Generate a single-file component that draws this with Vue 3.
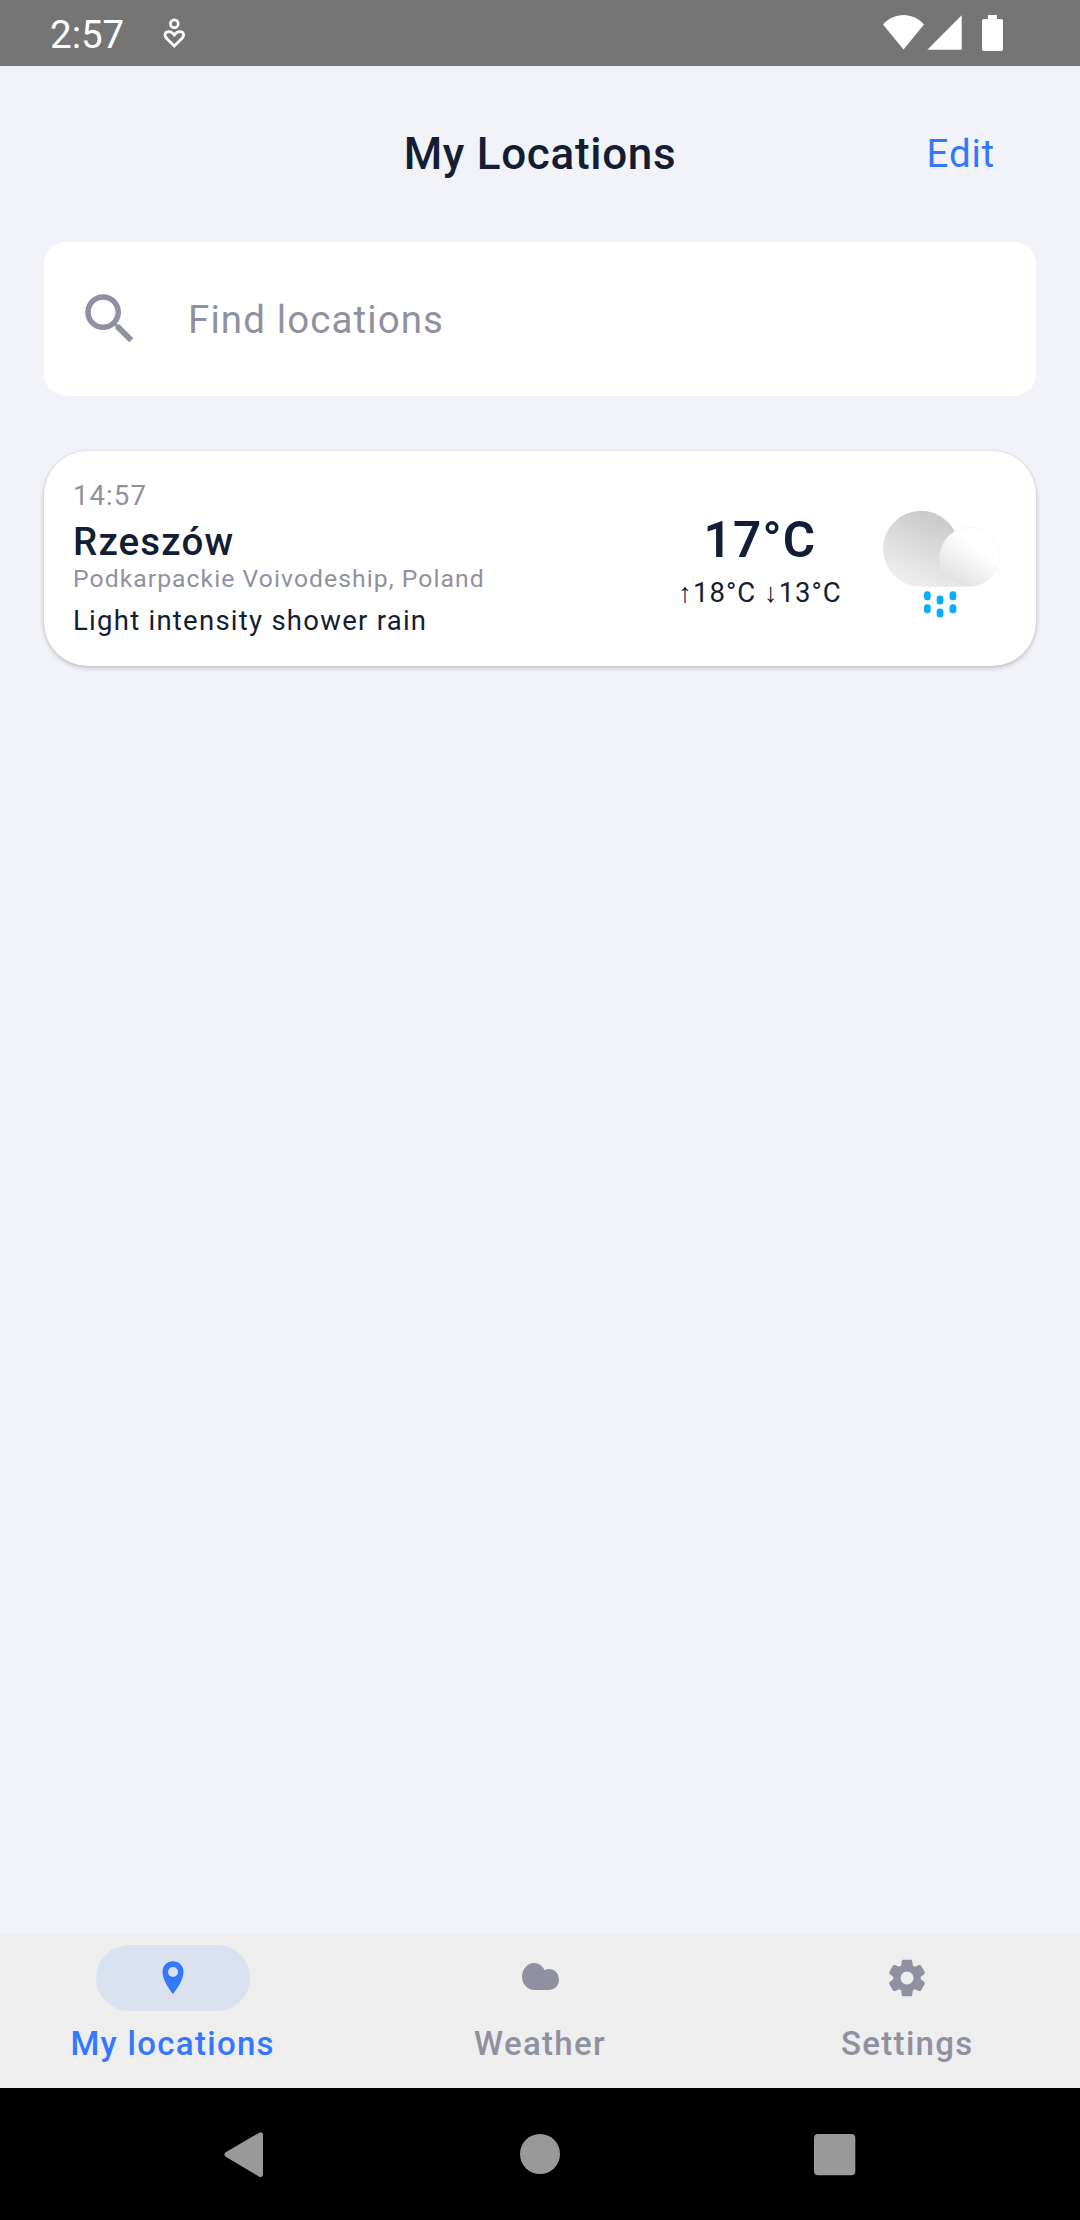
<script setup>
import { ref } from 'vue'

const activeTab = ref('locations')
const tabs = [
  { id: 'locations', label: 'My locations' },
  { id: 'weather', label: 'Weather' },
  { id: 'settings', label: 'Settings' }
]
const places = [
  {
    time: '14:57',
    city: 'Rzeszów',
    region: 'Podkarpackie Voivodeship, Poland',
    summary: 'Light intensity shower rain',
    now: '17°C',
    range: '↑18°C ↓13°C'
  }
]
</script>

<template>
  <div class="screen">
    <div class="status">
      <span class="clock">2:57</span>
      <svg class="wellbeing" width="26" height="36" viewBox="161 15 26 36" fill="none" stroke="#fff" stroke-width="2.7">
        <circle cx="174.3" cy="23.7" r="3.9" />
        <path d="M174.3 46L167 38.7C163.4 35 165 31.7 168.8 31.7C171.5 31.7 173 33.2 174.3 35C175.6 33.2 177.1 31.7 179.8 31.7C183.6 31.7 185.2 35 181.6 38.7Z" />
      </svg>
      <svg class="signals" width="124" height="40" viewBox="881 13 124 40" fill="#fff">
        <path d="M903.5 49.5L883 24.5C888.5 18.5 895.5 15 903.5 15S918.5 18.5 924 24.5Z" />
        <path d="M961.7 15.2V49.8H927.3Z" />
        <path d="M988 15H997V19H1001.2Q1003 19 1003 20.8V49.2Q1003 51 1001.2 51H983.8Q982 51 982 49.2V20.8Q982 19 983.8 19H988Z" />
      </svg>
    </div>

    <header class="header">
      <span></span>
      <h1>My Locations</h1>
      <button class="edit">Edit</button>
    </header>

    <div class="search">
      <svg width="66" height="66" viewBox="0 0 24 24" fill="#9091a0">
        <path d="M15.5 14h-.79l-.28-.27C15.41 12.59 16 11.11 16 9.5 16 5.91 13.09 3 9.5 3S3 5.91 3 9.5 5.91 16 9.5 16c1.61 0 3.09-.59 4.23-1.57l.27.28v.79l5 4.99L20.49 19l-4.99-5zm-6 0C7.01 14 5 11.99 5 9.5S7.01 5 9.5 5 14 7.01 14 9.5 11.99 14 9.5 14z" />
      </svg>
      <span>Find locations</span>
    </div>

    <main class="list">
      <article v-for="p in places" :key="p.city" class="card">
        <div class="info">
          <div class="time">{{ p.time }}</div>
          <div class="city">{{ p.city }}</div>
          <div class="region">{{ p.region }}</div>
          <div class="summary">{{ p.summary }}</div>
        </div>
        <div class="temps">
          <div class="now">{{ p.now }}</div>
          <div class="range">{{ p.range }}</div>
        </div>
        <svg class="sky" width="132" height="132" viewBox="876 492 132 132">
          <defs>
            <linearGradient id="cloudBack" gradientUnits="userSpaceOnUse" x1="944" y1="520" x2="912" y2="592">
              <stop offset="0" stop-color="#cacaca" />
              <stop offset="1" stop-color="#f2f2f2" />
            </linearGradient>
            <linearGradient id="cloudFront" gradientUnits="userSpaceOnUse" x1="979" y1="549" x2="953" y2="586">
              <stop offset="0" stop-color="#ffffff" />
              <stop offset="1" stop-color="#dedede" />
            </linearGradient>
          </defs>
          <path d="M921 510.8A38 38 0 0 0 921 586.8H969.5V549H959A38 38 0 0 0 921 510.8Z" fill="url(#cloudBack)" />
          <circle cx="969.4" cy="557" r="29.6" fill="url(#cloudFront)" stroke="#eeeeee" stroke-width=".5" />
          <g fill="#0aacff">
            <rect x="924" y="591.3" width="6.7" height="9" rx="3" />
            <rect x="936.7" y="595.6" width="6.7" height="9" rx="3" />
            <rect x="949.6" y="591.3" width="6.7" height="9" rx="3" />
            <rect x="924" y="604.2" width="6.7" height="9" rx="3" />
            <rect x="936.7" y="608.5" width="6.7" height="9" rx="3" />
            <rect x="949.6" y="604.2" width="6.7" height="9" rx="3" />
          </g>
        </svg>
      </article>
    </main>

    <nav class="tabs">
      <button
        v-for="t in tabs"
        :key="t.id"
        class="tab"
        :class="{ active: t.id === activeTab }"
        @click="activeTab = t.id"
      >
        <span class="pill">
          <svg v-if="t.id === 'locations'" width="44" height="44" viewBox="151 1956 44 44" fill="currentColor">
            <path fill-rule="evenodd" d="M173 1961.2C167 1961.2 162.5 1965.7 162.5 1971.8C162.5 1979.5 168.5 1988.5 173 1994C177.5 1988.5 183.5 1979.5 183.5 1971.8C183.5 1965.7 179 1961.2 173 1961.2ZM173 1967A5 5 0 1 1 173 1977A5 5 0 1 1 173 1967Z" />
          </svg>
          <svg v-else-if="t.id === 'weather'" width="44" height="44" viewBox="518 1956 44 44" fill="currentColor">
            <path d="M534.3 1963A12.3 13.5 0 0 0 534.3 1990H549.5A9.5 10.5 0 0 0 549.5 1969Q546.8 1969 544.8 1970.3C542.5 1966 538.7 1963 534.3 1963Z" />
          </svg>
          <svg v-else width="44" height="44" viewBox="0 0 24 24" fill="currentColor">
            <path d="M19.5 12c0-.23-.01-.45-.03-.68l1.86-1.41c.4-.3.51-.86.26-1.3l-1.87-3.23c-.25-.44-.79-.62-1.25-.42l-2.15.91c-.37-.26-.76-.49-1.17-.68l-.29-2.31C14.8 2.38 14.37 2 13.87 2h-3.73c-.51 0-.94.38-1 .88l-.29 2.31c-.41.19-.8.42-1.17.68l-2.15-.91c-.46-.2-1-.02-1.25.42L2.41 8.62c-.25.44-.14.99.26 1.29l1.86 1.41C4.51 11.55 4.5 11.77 4.5 12s.01.45.03.68l-1.86 1.41c-.4.3-.51.86-.26 1.3l1.87 3.23c.25.44.79.62 1.25.42l2.15-.91c.37.26.76.49 1.17.68l.29 2.31c.06.5.49.88.99.88h3.73c.5 0 .93-.38.99-.88l.29-2.31c.41-.19.8-.42 1.17-.68l2.15.91c.46.2 1 .02 1.25-.42l1.87-3.23c.25-.44.14-.99-.26-1.3l-1.86-1.41c.02-.23.03-.45.03-.68zM12.04 15.5c-1.93 0-3.5-1.57-3.5-3.5s1.57-3.5 3.5-3.5 3.5 1.57 3.5 3.5-1.57 3.5-3.5 3.5z" />
          </svg>
        </span>
        <span class="label">{{ t.label }}</span>
      </button>
    </nav>

    <div class="system">
      <svg width="66" height="66" viewBox="213 2121 66 66" fill="#999" stroke="#999" stroke-width="5" stroke-linejoin="round">
        <path d="M260.5 2134.8V2174.5L227 2154.5Z" />
      </svg>
      <svg width="66" height="66" viewBox="507 2121 66 66" fill="#999"><circle cx="540" cy="2154" r="20" /></svg>
      <svg width="66" height="66" viewBox="801 2121 66 66" fill="#999"><rect x="814" y="2134" width="41.3" height="41.3" rx="4" /></svg>
    </div>
  </div>
</template>

<style>
body {
  background: #f2f3f8;
}
</style>

<style scoped>
.screen {
  display: flex;
  flex-direction: column;
  width: 1080px;
  height: 2220px;
  background: #f2f3f8;
  color: #131d33;
  font-family: Roboto, sans-serif;
}
button {
  padding: 0;
  border: 0;
  background: none;
  font: inherit;
}
svg {
  display: block;
  flex: none;
}
.status {
  display: flex;
  align-items: center;
  flex: none;
  box-sizing: border-box;
  height: 66px;
  padding: 0 75px 0 50px;
  background: #757575;
  color: #fff;
}
.clock {
  width: 111px;
  padding-top: 3px;
  font-size: 38.5px;
  line-height: 46px;
}
.signals {
  margin-left: auto;
}
.header {
  display: grid;
  grid-template-columns: 1fr auto 1fr;
  align-items: center;
  flex: none;
  height: 176px;
  padding: 0 85px;
}
h1 {
  margin: 0;
  font-size: 44px;
  font-weight: 500;
  line-height: 60px;
  letter-spacing: 0.7px;
}
.edit {
  justify-self: end;
  color: #3478ff;
  font-size: 38.5px;
  line-height: 60px;
  letter-spacing: 0.8px;
}
.search {
  display: flex;
  align-items: center;
  gap: 45px;
  flex: none;
  box-sizing: border-box;
  height: 154px;
  margin: 0 44px;
  padding: 0 33px;
  border-radius: 22px;
  background: #fff;
  color: #9091a0;
  font-size: 38.5px;
  letter-spacing: 1.1px;
}
.list {
  flex: 1;
  padding: 55px 44px 0;
}
.card {
  display: flex;
  box-sizing: border-box;
  height: 215px;
  padding: 22px 28px 16px 29px;
  border-radius: 44px;
  background: #fff;
  box-shadow: 0 2px 5px rgba(0, 0, 0, 0.2), 0 0 2px rgba(0, 0, 0, 0.1);
}
.info {
  flex: 1;
  white-space: nowrap;
}
.time {
  color: #9091a0;
  font-size: 27.5px;
  line-height: 45px;
  letter-spacing: 1.1px;
}
.city {
  font-size: 38.5px;
  font-weight: 500;
  line-height: 48px;
  letter-spacing: 1.15px;
}
.region {
  color: #9091a0;
  font-size: 24.75px;
  line-height: 25px;
  letter-spacing: 1.04px;
}
.summary {
  font-size: 27.5px;
  line-height: 59px;
  letter-spacing: 1.26px;
}
.temps {
  width: 200px;
  margin-right: 16px;
  padding-top: 38px;
  text-align: center;
  white-space: nowrap;
}
.now {
  font-size: 49.5px;
  font-weight: 600;
  line-height: 58px;
  letter-spacing: 1.2px;
}
.range {
  font-size: 27.5px;
  line-height: 47px;
  letter-spacing: 1px;
}
.sky {
  margin-top: 19px;
}
.tabs {
  display: flex;
  gap: 22px;
  flex: none;
  height: 154px;
  background: #eee;
}
.tab {
  display: flex;
  flex: 1;
  flex-direction: column;
  align-items: center;
  padding-top: 11px;
  color: #9091a0;
}
.tab.active {
  color: #3478ff;
}
.pill {
  display: flex;
  align-items: center;
  justify-content: center;
  width: 154px;
  height: 66px;
  border-radius: 33px;
}
.active .pill {
  background: #dbe2ef;
}
.label {
  font-size: 33px;
  font-weight: 500;
  line-height: 65px;
  letter-spacing: 1.3px;
}
.system {
  display: flex;
  align-items: center;
  justify-content: space-around;
  flex: none;
  height: 132px;
  padding: 0 99px;
  background: #000;
}
</style>
